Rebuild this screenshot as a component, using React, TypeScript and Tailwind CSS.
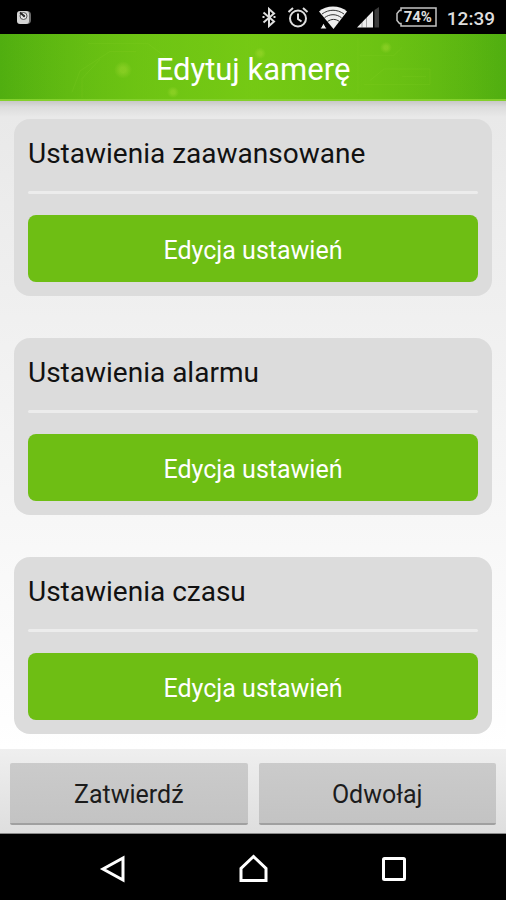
const sections = [
  { id: "advanced", title: "Ustawienia zaawansowane" },
  { id: "alarm", title: "Ustawienia alarmu" },
  { id: "time", title: "Ustawienia czasu" },
];

function StatusBar() {
  return (
    <div className="flex h-[34px] items-center justify-between bg-black pr-[11px] pl-4 text-[#dedede]">
      <svg width="16" height="16" viewBox="0 0 16 16" aria-hidden="true">
        <rect x="3" y="2" width="12" height="13" rx="4" fill="#6a6a6a" />
        <rect x="1" y="2" width="12" height="13" rx="3" fill="#d4d4d4" />
        <circle cx="7.500" cy="7" r="3.500" fill="#e8e8e8" stroke="#555" />
        <path d="M4 3.500l3.500 3" stroke="#222" strokeWidth="1.800" />
        <circle cx="8" cy="7" r="1.200" fill="#333" />
      </svg>
      <div className="flex items-center gap-[10px]">
        <svg width="16" height="22" viewBox="0 0 16 22" fill="none" stroke="currentColor" strokeWidth="2" aria-hidden="true">
          <path d="M2.500 6.500l10.500 9L8 20V3l5 4.500-10.500 9" />
          <path d="M1.500 11h2M12.500 11h2" />
        </svg>
        <svg width="22" height="22" viewBox="0 0 22 22" fill="none" stroke="currentColor" strokeWidth="2" aria-hidden="true">
          <circle cx="11" cy="12.500" r="8" />
          <path d="M11 7.500v5.500l3.500 2.500M1.500 6l4.500-4M20.500 6L16 2" />
        </svg>
        <svg width="28" height="24" viewBox="0 0 28 24" aria-hidden="true">
          <path d="M0 6.500C7-.2 21-.2 28 6.500L14.500 24z" fill="#eee" />
          <g fill="none" stroke="#333" strokeWidth="1">
            <path d="M3 9c7-5 15-5 22 0" />
            <path d="M5.500 12.700c5.500-4 11.500-4 17 0" />
            <path d="M8.500 16.500c4-2.800 8-2.800 12 0" />
          </g>
          <path d="M1 24l3.500-6L8 24z" fill="#eee" stroke="#000" strokeWidth="1" />
        </svg>
        <svg width="28" height="22" viewBox="0 0 28 22" aria-hidden="true">
          <path d="M0 21.500L16 5v16.500z" fill="#eee" />
          <path d="M5 15v6.500M9.500 11v10.500" stroke="#000" strokeOpacity=".3" />
          <path d="M17.500 4l4.500-3v20.500h-4.500z" fill="#3c3c3c" />
        </svg>
        <div className="relative flex h-5 w-[42px] items-center justify-center pl-1">
          <svg className="absolute inset-0" width="42" height="20" viewBox="0 0 42 20" fill="none" stroke="#c4c4c4" strokeWidth="1.500" aria-hidden="true">
            <path d="M6 1h35v18H6v-2.500H4.500l-2.500-3v-7l2.500-3H6z" />
          </svg>
          <span className="text-[15px] leading-none font-bold">74%</span>
        </div>
        <span className="pt-[2px] text-[19px] leading-none font-medium">12:39</span>
      </div>
    </div>
  );
}

function Header() {
  return (
    <header className="relative flex h-[67px] items-center justify-center overflow-hidden border-b-2 border-[#84d02c] bg-linear-to-r from-[#50ae10] via-[#7acb14] to-[#50ae10] pt-[6px]">
      <svg
        className="absolute inset-0 h-full w-full"
        viewBox="0 0 506 67"
        preserveAspectRatio="none"
        fill="none"
        stroke="#a4dc38"
        strokeOpacity=".12"
        aria-hidden="true"
      >
        <defs>
          <radialGradient id="glow">
            <stop offset="0.3" stopColor="#b4e03c" stopOpacity=".35" />
            <stop offset="1" stopColor="#b4e03c" stopOpacity="0" />
          </radialGradient>
          <linearGradient id="band">
            <stop offset="0" stopColor="#72c814" stopOpacity="0" />
            <stop offset="0.3" stopColor="#72c814" stopOpacity=".6" />
            <stop offset="0.7" stopColor="#72c814" stopOpacity=".6" />
            <stop offset="1" stopColor="#72c814" stopOpacity="0" />
          </linearGradient>
        </defs>
        <rect width="506" height="67" fill="url(#band)" stroke="none" />
        <path d="M72 60l8-22 30-20h26M82 66V46l18-20M358 4v58M370 48l14-12h46v16h-66M360 22h34l8-8M402 44h24M88 10h60l18 14" />
        <g fill="url(#glow)" stroke="none">
          <circle cx="123" cy="37" r="9" />
          <circle cx="173" cy="60" r="6" />
          <circle cx="386" cy="14" r="6" />
          <circle cx="260" cy="20" r="6" />
        </g>
      </svg>
      <h1 className="relative text-[31px] leading-10 text-white">Edytuj kamerę</h1>
    </header>
  );
}

function NavBar() {
  return (
    <nav className="flex h-[66px] items-center justify-center gap-[109px] bg-black pt-[3px] text-white">
      <button type="button" aria-label="Wstecz" className="flex w-8 justify-center">
        <svg width="32" height="32" viewBox="0 0 32 32" fill="none" stroke="currentColor" strokeWidth="3">
          <path d="M27 5v22L7 16z" />
        </svg>
      </button>
      <button type="button" aria-label="Ekran główny" className="flex w-8 justify-center">
        <svg width="32" height="32" viewBox="0 0 32 32" fill="none" stroke="currentColor" strokeWidth="3">
          <path d="M4 27.500V15.500L16.500 3.500 29 15.500v12z" />
        </svg>
      </button>
      <button type="button" aria-label="Ostatnie" className="flex w-8 justify-center">
        <svg width="32" height="32" viewBox="0 0 32 32" fill="none" stroke="currentColor" strokeWidth="3">
          <rect x="5.500" y="5.500" width="21" height="21" rx="1" />
        </svg>
      </button>
    </nav>
  );
}

const footerButton =
  "h-[62px] flex-1 rounded-[2px] border-b-2 border-[#a0a0a0] bg-linear-to-b from-[#cbcbcb] to-[#c3c3c3] pt-1 text-[25px] text-[#1c1c1c]";

export default function App() {
  return (
    <div className="flex min-h-screen flex-col bg-black font-[Roboto,sans-serif]">
      <StatusBar />
      <Header />
      <main className="flex flex-1 flex-col gap-[42px] bg-[linear-gradient(to_bottom,#c8c8c8_0px,#dcdcdc_6px,#e9e9e9_16px,#ffffff_100%)] px-[14px] pt-[18px] pb-[14px]">
        {sections.map((section) => (
          <section key={section.id} className="rounded-2xl bg-[#dcdcdc] p-[14px]">
            <h2 className="h-[58px] text-[28px] leading-[42px] text-[#111]">{section.title}</h2>
            <div className="h-[3px] rounded-full bg-[#ececec]" />
            <button
              type="button"
              className="mt-[21px] h-[67px] w-full rounded-lg bg-[#6ebe14] pt-1 text-[25px] text-white"
            >
              Edycja ustawień
            </button>
          </section>
        ))}
      </main>
      <footer className="flex gap-[11px] border-b border-[#8a8a8a] bg-linear-to-b from-[#efefef] to-[#dedede] px-[10px] pt-[14px] pb-2">
        <button type="button" className={footerButton}>
          Zatwierdź
        </button>
        <button type="button" className={footerButton}>
          Odwołaj
        </button>
      </footer>
      <NavBar />
    </div>
  );
}
